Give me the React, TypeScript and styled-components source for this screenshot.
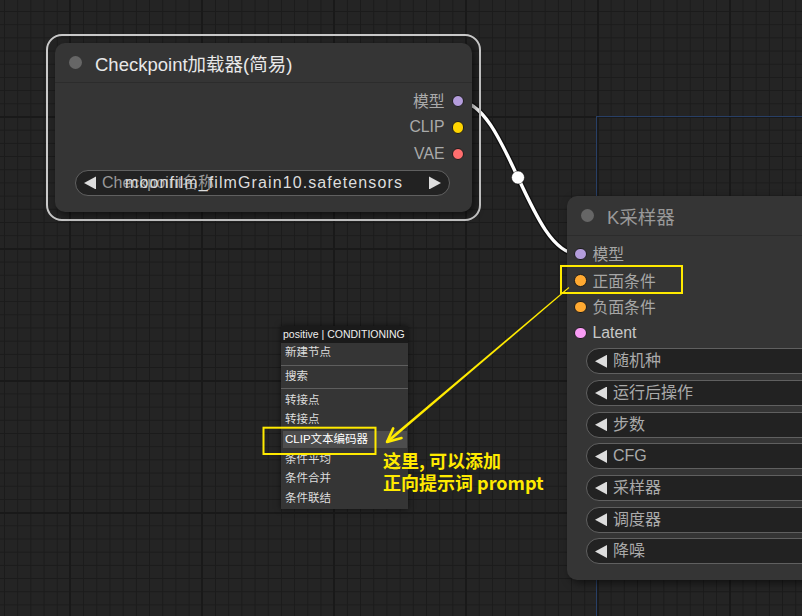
import React from 'react';
import styled, { createGlobalStyle } from 'styled-components';

const FONT = `"Liberation Sans", "Noto Sans CJK SC", sans-serif`;

const GlobalStyle = createGlobalStyle`
  html, body { margin: 0; padding: 0; background: #232323; }
  body { font-family: ${FONT}; overflow: hidden; }
`;

const Canvas = styled.div`
  position: relative;
  width: 802px;
  height: 616px;
  overflow: hidden;
  background-color: #242424;
  background-image:
    linear-gradient(to right, #191919 2px, transparent 2px),
    linear-gradient(to bottom, #191919 2px, transparent 2px),
    linear-gradient(to right, #1b1b1b 1px, transparent 1px),
    linear-gradient(to bottom, #1b1b1b 1px, transparent 1px);
  background-size: 132px 132px, 132px 132px, 13.2px 13.2px, 13.2px 13.2px;
  background-position: 69px 0, 0 116px, 4px 0, 0 11px;
`;

const GroupFrame = styled.div`
  position: absolute;
  left: 596px;
  top: 116px;
  width: 400px;
  height: 600px;
  border-left: 1.5px solid #283f66;
  border-top: 1.5px solid #283f66;
`;

const Layer = styled.svg`
  position: absolute;
  left: 0;
  top: 0;
  width: 802px;
  height: 616px;
  pointer-events: none;
`;

const SelectionFrame = styled.div`
  position: absolute;
  left: 46px;
  top: 34px;
  padding: 7px;
  border: 2px solid #c9c9c9;
  border-radius: 16px;
`;

const SamplerPlace = styled.div`
  position: absolute;
  left: 567px;
  top: 196px;
`;

const Node = styled.div<{ $w: number }>`
  width: ${p => p.$w}px;
  background: #353535;
  border-radius: 10px;
  box-shadow: 3px 3px 8px rgba(0, 0, 0, 0.55);
  display: flex;
  flex-direction: column;
  font-family: ${FONT};
`;

const TitleBar = styled.div<{ $active?: boolean }>`
  height: 40px;
  box-sizing: border-box;
  display: flex;
  align-items: center;
  gap: 13.5px;
  padding-left: 13.5px;
  border-bottom: 1px solid #2c2c2c;
  color: ${p => (p.$active ? '#e8e8e8' : '#999999')};
  font-size: 18.5px;
  white-space: nowrap;
`;

const TitleDot = styled.span`
  width: 13px;
  height: 13px;
  border-radius: 50%;
  background: #666;
  flex: none;
`;

const Body = styled.div<{ $bottom: number }>`
  display: flex;
  flex-direction: column;
  padding: 4.8px 0 ${p => p.$bottom}px;
`;

const OutputRow = styled.div`
  height: 26.4px;
  display: flex;
  align-items: center;
  justify-content: flex-end;
  gap: 7px;
  padding-right: 8px;
  font-size: 15.8px;
  color: #aaaaaa;
`;

const InputRow = styled.div<{ $bright?: boolean }>`
  height: 26.4px;
  display: flex;
  align-items: center;
  gap: 6px;
  padding-left: 7px;
  font-size: 15.8px;
  color: ${p => (p.$bright ? '#c8c8c8' : '#a6a6a6')};
`;

const SlotDot = styled.span<{ $c: string }>`
  width: 12.5px;
  height: 12.5px;
  box-sizing: border-box;
  border-radius: 50%;
  border: 1.2px solid #1c1c1c;
  background: ${p => p.$c};
  flex: none;
`;

const WidgetList = styled.div<{ $top: number; $side: number; $right: number }>`
  display: flex;
  flex-direction: column;
  gap: 5.7px;
  margin: ${p => p.$top}px ${p => p.$right}px 0 ${p => p.$side}px;
`;

const Widget = styled.div`
  height: 26px;
  box-sizing: border-box;
  border-radius: 13px;
  background: #222222;
  border: 1px solid #606060;
  display: flex;
  align-items: center;
  padding: 0 8px;
  gap: 6px;
  font-size: 16px;
  line-height: 20px;
  color: #aaaaaa;
  white-space: nowrap;
  overflow: hidden;
`;

const Tri = styled.span<{ $dir: 'left' | 'right' }>`
  width: 12px;
  height: 13px;
  background: #dddddd;
  flex: none;
  clip-path: ${p =>
    p.$dir === 'left'
      ? 'polygon(0 50%, 100% 0, 100% 100%)'
      : 'polygon(0 0, 100% 50%, 0 100%)'};
`;

const ComboContent = styled.div`
  flex: 1;
  display: grid;
  align-items: baseline;
  margin-right: 20px;
  min-width: 0;
`;

const ComboLabel = styled.span`
  grid-area: 1 / 1;
  justify-self: start;
  color: #999999;
`;

const ComboValue = styled.span`
  grid-area: 1 / 1;
  justify-self: end;
  color: #dddddd;
  letter-spacing: 1.1px;
`;

const Menu = styled.div`
  position: absolute;
  left: 281px;
  top: 326px;
  width: 127px;
  background: #353535;
  box-shadow: 0 0 6px rgba(0, 0, 0, 0.6);
  display: flex;
  flex-direction: column;
  font-family: ${FONT};
`;

const MenuTitle = styled.div`
  height: 17px;
  line-height: 17px;
  background: #1a1a1a;
  color: #eeeeee;
  font-size: 10.5px;
  padding-left: 2px;
  white-space: nowrap;
  overflow: hidden;
`;

const MenuItem = styled.div<{ $hl?: boolean }>`
  height: 17px;
  line-height: 17px;
  margin: 1.35px 1.5px;
  padding-left: 2.5px;
  font-size: 11.5px;
  color: ${p => (p.$hl ? '#ffffff' : '#dddddd')};
  background: ${p => (p.$hl ? '#4d4d4d' : 'transparent')};
  white-space: nowrap;
`;

const MenuSep = styled.div`
  height: 1px;
  background: #5e5e5e;
  margin: 2px 0 1px;
`;

const Note = styled.div`
  position: absolute;
  left: 383px;
  top: 450px;
  display: flex;
  flex-direction: column;
  color: #ffea00;
  font-family: "Noto Sans CJK SC", "Liberation Sans", sans-serif;
  font-weight: 700;
  font-size: 18px;
  white-space: nowrap;
`;

const NoteLine = styled.div`
  height: 21.6px;
  line-height: 21.6px;
`;

const YELLOW = '#ffea00';

export default function App() {
  const samplerWidgets = ['随机种', '运行后操作', '步数', 'CFG', '采样器', '调度器', '降噪'];
  return (
    <>
      <GlobalStyle />
      <Canvas>
        <GroupFrame />
        <Layer viewBox="0 0 802 616">
          <path d="M458 101 C507 101 529 254 578 254" stroke="rgba(0,0,0,0.55)" strokeWidth={6} fill="none" />
          <path d="M458 101 C507 101 529 254 578 254" stroke="#ffffff" strokeWidth={3.4} fill="none" />
          <circle cx={518} cy={177.5} r={6.5} fill="#ffffff" stroke="rgba(0,0,0,0.45)" strokeWidth={1} />
        </Layer>

        <SelectionFrame>
          <Node $w={417}>
            <TitleBar $active>
              <TitleDot />
              Checkpoint加载器(简易)
            </TitleBar>
            <Body $bottom={16}>
              <OutputRow>
                模型
                <SlotDot $c="#b49ddc" />
              </OutputRow>
              <OutputRow>
                CLIP
                <SlotDot $c="#ffd500" />
              </OutputRow>
              <OutputRow>
                VAE
                <SlotDot $c="#ff6e6e" />
              </OutputRow>
              <WidgetList $top={3} $side={20} $right={22}>
                <Widget>
                  <Tri $dir="left" />
                  <ComboContent>
                    <ComboLabel>Checkpoint名称</ComboLabel>
                    <ComboValue>moonfilm_filmGrain10.safetensors</ComboValue>
                  </ComboContent>
                  <Tri $dir="right" />
                </Widget>
              </WidgetList>
            </Body>
          </Node>
        </SelectionFrame>

        <SamplerPlace>
          <Node $w={300}>
            <TitleBar>
              <TitleDot />
              K采样器
            </TitleBar>
            <Body $bottom={15.5}>
              <InputRow>
                <SlotDot $c="#b49ddc" />
                模型
              </InputRow>
              <InputRow>
                <SlotDot $c="#ffa931" />
                正面条件
              </InputRow>
              <InputRow>
                <SlotDot $c="#ffa931" />
                负面条件
              </InputRow>
              <InputRow $bright>
                <SlotDot $c="#f99cf5" />
                Latent
              </InputRow>
              <WidgetList $top={2} $side={19} $right={19}>
                {samplerWidgets.map(w => (
                  <Widget key={w}>
                    <Tri $dir="left" />
                    {w}
                  </Widget>
                ))}
              </WidgetList>
            </Body>
          </Node>
        </SamplerPlace>

        <Menu>
          <MenuTitle>positive | CONDITIONING</MenuTitle>
          <MenuItem>新建节点</MenuItem>
          <MenuSep />
          <MenuItem>搜索</MenuItem>
          <MenuSep />
          <MenuItem>转接点</MenuItem>
          <MenuItem>转接点</MenuItem>
          <MenuItem $hl>CLIP文本编码器</MenuItem>
          <MenuItem>条件平均</MenuItem>
          <MenuItem>条件合并</MenuItem>
          <MenuItem>条件联结</MenuItem>
        </Menu>

        <Layer viewBox="0 0 802 616">
          <rect x={561} y={266} width={121} height={27} fill="none" stroke={YELLOW} strokeWidth={2} />
          <rect x={263.5} y={427.7} width={112} height={26.3} fill="none" stroke={YELLOW} strokeWidth={2} />
          <polygon points="569.3,287.9 388,443.1 386,440.9 568.7,287.1" fill={YELLOW} />
          <path d="M401.5 438 L387 442 L393.2 428.4" fill="none" stroke={YELLOW} strokeWidth={2.6} strokeLinecap="round" strokeLinejoin="round" />
        </Layer>

        <Note>
          <NoteLine>这里, 可以添加</NoteLine>
          <NoteLine>正向提示词 prompt</NoteLine>
        </Note>
      </Canvas>
    </>
  );
}
